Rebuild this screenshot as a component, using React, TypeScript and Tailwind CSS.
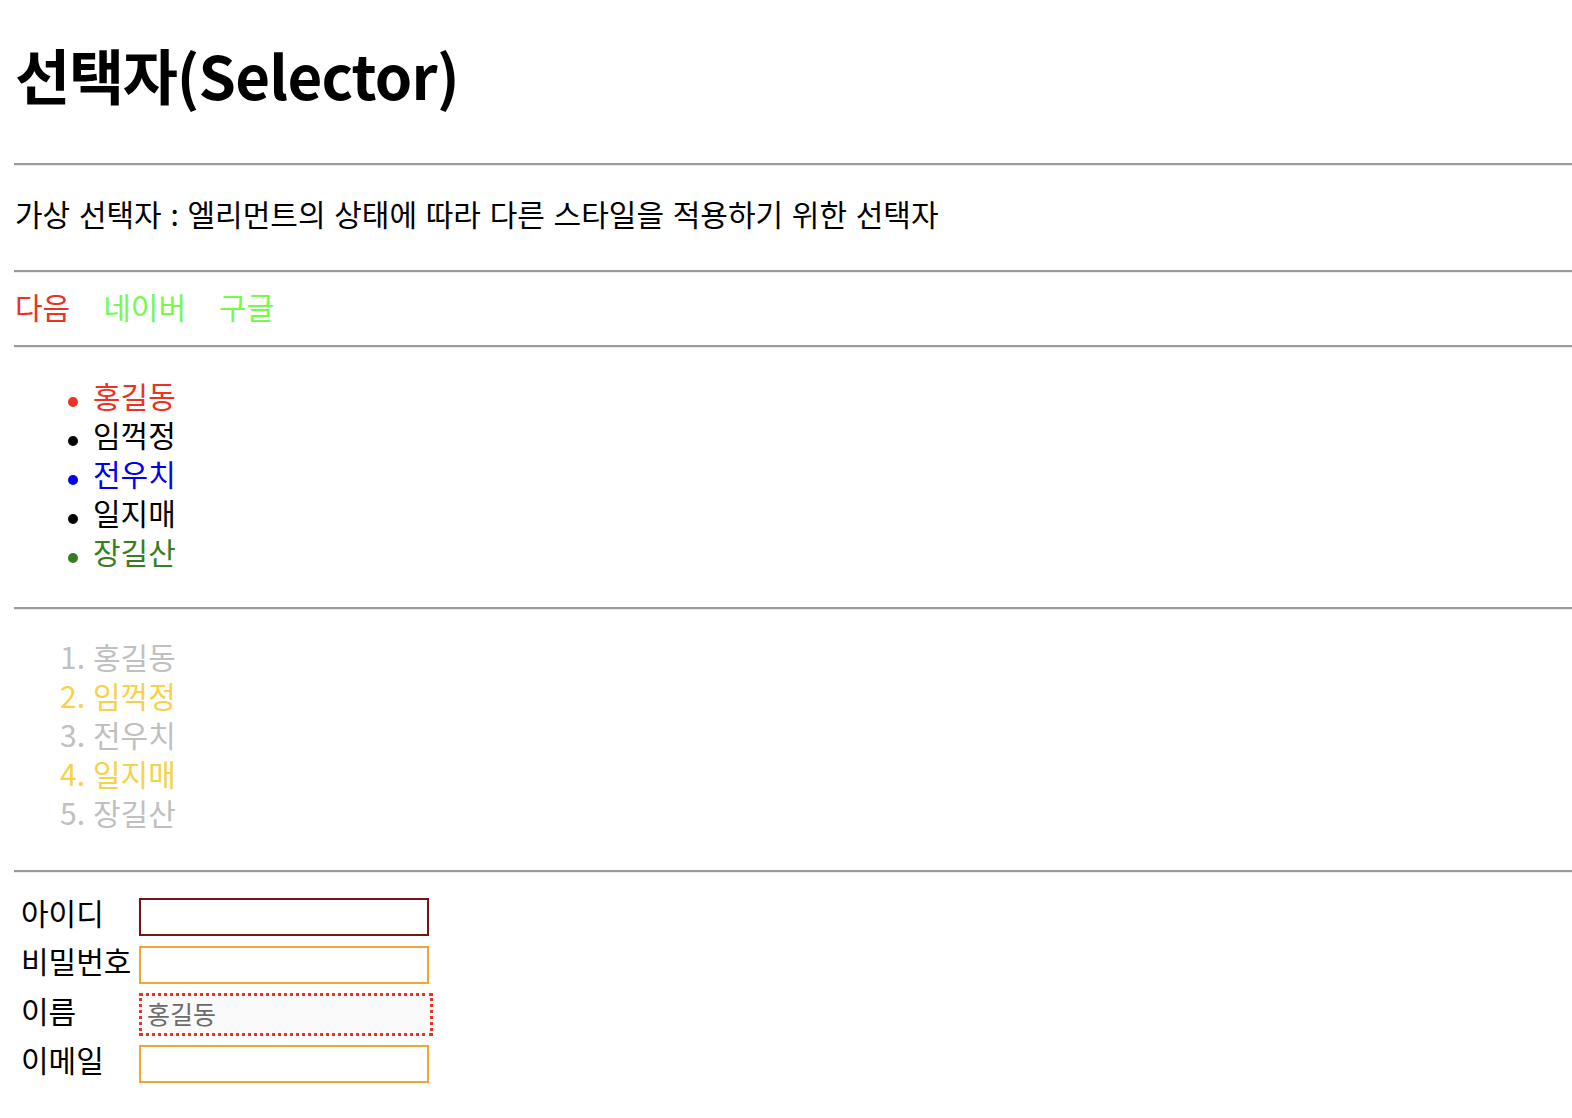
import React from "react";

const Rule: React.FC<{ className?: string }> = ({ className = "" }) => (
  <div
    className={`ml-[14px] h-[3px] border-t-2 border-b border-t-[#9a9a9a] border-b-[#ececec] ${className}`}
  />
);

const people = [
  { name: "홍길동", color: "text-[#eb3323]" },
  { name: "임꺽정", color: "text-black" },
  { name: "전우치", color: "text-[#0000f5]" },
  { name: "일지매", color: "text-black" },
  { name: "장길산", color: "text-[#377e22]" },
];

const App: React.FC = () => {
  return (
    <main className="min-h-screen bg-white pb-10 font-['Noto_Sans_CJK_KR',sans-serif] text-black">
      <h1 className="ml-[15px] pt-[44px] text-[60px] leading-[60px] font-bold">
        <span className="tracking-[-1.3px]">선택자</span>
        <span className="tracking-[-0.8px]">(Selector)</span>
      </h1>

      <Rule className="mt-[59px]" />

      <p className="ml-[15px] mt-[27px] text-[30px] leading-[40px] [word-spacing:2px]">
        가상 선택자 : 엘리먼트의 상태에 따라 다른 스타일을 적용하기 위한 선택자
      </p>

      <Rule className="mt-[37px]" />

      <nav className="ml-[15px] mt-[13px] flex gap-[33px] text-[30px] leading-[40px]">
        <a href="#" className="text-[#eb3323]">다음</a>
        <a href="#" className="text-[#75f94c]">네이버</a>
        <a href="#" className="text-[#75f94c]">구글</a>
      </nav>

      <Rule className="mt-[19px]" />

      {/* unordered list with coloured markers */}
      <ul className="mt-[28px] text-[30px] leading-[39px]">
        {people.map((p) => (
          <li key={p.name} className={`flex items-start ${p.color}`}>
            <span className="flex w-[93px] shrink-0 justify-end pr-[15px]">
              <span className="mt-[21px] size-[10px] rounded-full bg-current" />
            </span>
            <span>{p.name}</span>
          </li>
        ))}
      </ul>

      <Rule className="mt-[36px]" />

      {/* ordered list, even rows in gold */}
      <ol className="mt-[27px] text-[30px] leading-[39px]">
        {people.map((p, i) => (
          <li
            key={p.name}
            className={`flex ${i % 2 === 1 ? "text-[#f6d24a]" : "text-[#c0c0c0]"}`}
          >
            <span className="w-[85px] shrink-0 text-right">{i + 1}.</span>
            <span className="ml-[8px]">{p.name}</span>
          </li>
        ))}
      </ol>

      <Rule className="mt-[38px]" />

      <form className="mt-[25px] flex flex-col text-[30px]">
        <div className="flex h-[38px] items-center">
          <label className="ml-[21px] w-[118px] pb-[10px] leading-[40px]">아이디</label>
          <input className="h-[38px] w-[290px] border-2 border-[#75150f] bg-white outline-none" />
        </div>
        <div className="mt-[10px] flex h-[38px] items-center">
          <label className="ml-[21px] w-[118px] pb-[10px] leading-[40px]">비밀번호</label>
          <input
            type="password"
            className="h-[38px] w-[290px] border-2 border-[#f0a535] bg-white outline-none"
          />
        </div>
        <div className="mt-[9px] flex h-[43px] items-center">
          <label className="ml-[21px] w-[118px] pb-[10px] leading-[40px]">이름</label>
          <input
            readOnly
            defaultValue="홍길동"
            className="h-[43px] w-[294px] border-[3px] border-dotted border-[#eb3323] bg-[#fafafa] px-[5px] pb-[4px] text-[25px] text-[#6b6b6b] outline-none"
          />
        </div>
        <div className="mt-[9px] flex h-[38px] items-center">
          <label className="ml-[21px] w-[118px] pb-[10px] leading-[40px]">이메일</label>
          <input className="h-[38px] w-[290px] border-2 border-[#f0a535] bg-white outline-none" />
        </div>
      </form>
    </main>
  );
};

export default App;
